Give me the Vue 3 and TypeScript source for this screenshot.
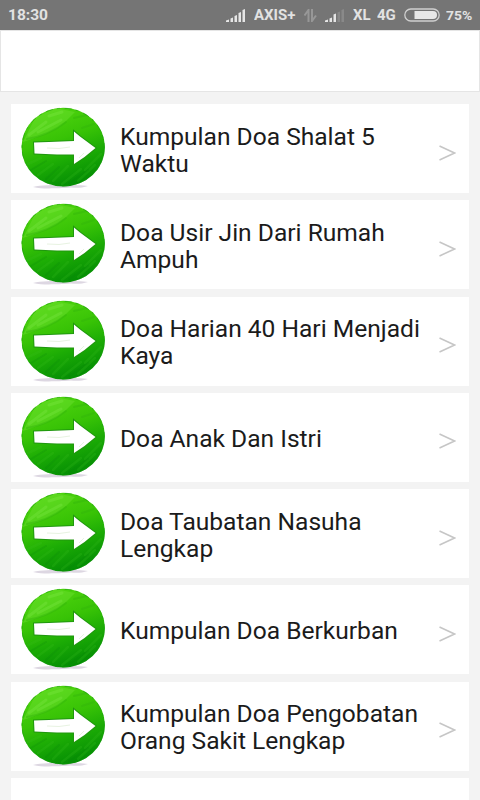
<script setup lang="ts">
interface Entry {
  id: number
  lines: string[]
}

const entries: Entry[] = [
  { id: 1, lines: ['Kumpulan Doa Shalat 5', 'Waktu'] },
  { id: 2, lines: ['Doa Usir Jin Dari Rumah', 'Ampuh'] },
  { id: 3, lines: ['Doa Harian 40 Hari Menjadi', 'Kaya'] },
  { id: 4, lines: ['Doa Anak Dan Istri'] },
  { id: 5, lines: ['Doa Taubatan Nasuha', 'Lengkap'] },
  { id: 6, lines: ['Kumpulan Doa Berkurban'] },
  { id: 7, lines: ['Kumpulan Doa Pengobatan', 'Orang Sakit Lengkap'] },
]
</script>

<template>
  <div class="screen">
    <header class="status">
      <span class="clock">18:30</span>
      <svg class="signal" width="20" height="13" viewBox="0 0 20 13">
        <path d="M0 13v-1.500l3-1V13zM4.500 13V9.500l2.500-1V13zM8.500 13V7L11 6v7zM12.500 13V4L15 3v10zM16.500 13V1L19 0v13z" fill="#e6e6e6" />
      </svg>
      <span class="carrier">AXIS+</span>
      <svg class="transfer" width="13" height="13" viewBox="0 0 13 13">
        <path d="M4.500 13V1L0.500 6.500M8 0v12l4-5.500" fill="none" stroke="#979797" stroke-width="2" />
      </svg>
      <svg class="signal second" width="20" height="13" viewBox="0 0 20 13">
        <path d="M0 13v-1.500l3-1V13zM4.500 13V9.500l2.500-1V13zM8.500 13V5.500L11 4.500V13z" fill="#e6e6e6" />
        <path d="M12.500 13V3.500L15 2.500V13zM16.500 13V1L19 0v13z" fill="#898989" />
      </svg>
      <span class="xl">XL</span>
      <span class="net">4G</span>
      <svg class="battery" width="36" height="14" viewBox="0 0 36 14">
        <rect x="0.800" y="1" width="34.400" height="12" rx="6" fill="none" stroke="#d0d0d0" stroke-width="1.300" />
        <path d="M10.500 3H29a4 4 0 0 1 0 8H10.500z" fill="#e8e8e8" />
      </svg>
      <span class="percent">75%</span>
    </header>
    <div class="toolbar"></div>
    <main class="list">
      <article v-for="entry in entries" :key="entry.id" class="row">
        <svg class="badge" width="88" height="89" viewBox="0 0 88 89">
          <defs>
            <linearGradient :id="`ball-${entry.id}`" x1="0.300" y1="0" x2="0.650" y2="1">
              <stop offset="0" stop-color="#50d50f" />
              <stop offset="0.400" stop-color="#38c306" />
              <stop offset="0.650" stop-color="#1cac05" />
              <stop offset="1" stop-color="#028a04" />
            </linearGradient>
            <clipPath :id="`edge-${entry.id}`">
              <ellipse cx="44.200" cy="43.300" rx="41.500" ry="39.300" />
            </clipPath>
          </defs>
          <path d="M14 83c8-2 20-2 30-2s20 0 25 1c-6 2-12 2-17 1.500-9 1-15 .5-22 1-6 0-11-.5-16-1.500z" fill="#ddd7e2" />
          <ellipse cx="44.200" cy="43.100" rx="41.700" ry="39.400" :fill="`url(#ball-${entry.id})`" />
          <g :clip-path="`url(#edge-${entry.id})`" fill="none" stroke-linecap="round">
            <path d="M4 38C18 33 34 29 47 17L56 8 36 4 16 14z" fill="#79e63b" opacity="0.350" />
            <path d="M10 31L27 18M19 28L42 16M30 12L43 8" stroke="#8df052" stroke-width="3" opacity="0.250" />
            <path d="M8 35C20 33 33 29 47 18M55 14L68 11M63 24L75 20" stroke="#32b60c" stroke-width="2" opacity="0.450" />
            <path d="M7 61L22 54M19 71L34 60M34 77L49 62M43 80L62 65M59 77L76 61M66 66L82 50" stroke="#3dbe20" stroke-width="2.500" opacity="0.220" />
            <path d="M12 66L27 57M27 75L40 63M50 79L69 66" stroke="#087e0b" stroke-width="2" opacity="0.180" />
          </g>
          <ellipse cx="44.200" cy="43.100" rx="41.200" ry="38.900" fill="none" stroke="#159b0b" stroke-width="1" stroke-dasharray="7 4 3 5" opacity="0.550" />
          <path d="M15 38.500l15-.5 25-1V27.500l6 5 15.500 11.500-11 9L55 60V50.500l-17 0-22.500-1z" fill="#fff" stroke="#20970f" stroke-width="2" paint-order="stroke" />
          <path d="M28 44l12 .5 11-1.500M60 54l5-5" fill="none" stroke="#e8f3e2" stroke-width="1" />
        </svg>
        <h2 class="title">
          <span v-for="line in entry.lines" :key="line" class="line">{{ line }}</span>
        </h2>
        <svg class="chevron" width="17" height="16" viewBox="0 0 17 16">
          <path d="M0.500 1L15.500 8L0.500 15" fill="none" stroke="#c6c6c6" stroke-width="1.500" />
        </svg>
      </article>
      <article class="row"></article>
    </main>
  </div>
</template>

<style>
body {
  overflow: hidden;
  background: #f3f3f3;
}
</style>

<style scoped>
.screen {
  width: 480px;
  height: 800px;
  overflow: hidden;
  background: #f3f3f3;
  font-family: Roboto, sans-serif;
}
.status {
  display: flex;
  align-items: center;
  box-sizing: border-box;
  height: 30px;
  padding: 0 8px;
  background: #757575;
  color: #e2e2e2;
  font-size: 14px;
  font-weight: 700;
  white-space: nowrap;
}
.status svg { flex: none; }
.status span {
  transform: scaleX(1.07);
  transform-origin: left center;
}
.status .clock { width: 218px; font-size: 14.500px; }
.carrier { width: 43px; margin-left: 8px; }
.transfer { margin-left: 7px; }
.second { margin-left: 8px; }
.xl { width: 18px; margin-left: 8px; }
.net { width: 19px; margin-left: 6px; }
.battery { margin-left: 8px; }
.percent { margin-left: 6px; font-size: 13px; }
.toolbar {
  box-sizing: border-box;
  height: 62px;
  border: 1px solid #e5e5e5;
  background: #fff;
}
.list {
  display: flex;
  flex-direction: column;
  gap: 7.3px;
  padding: 12px 11px 0;
}
.row {
  display: flex;
  align-items: center;
  flex: none;
  height: 89px;
  background: #fff;
}
.badge { flex: none; margin-left: 8px; }
.title {
  flex: 1;
  margin: 4px 0 0 13px;
  color: #1b1b1b;
  font-size: 23px;
  font-weight: 400;
  line-height: 27px;
  white-space: nowrap;
  transform: scaleX(1.068);
  transform-origin: left center;
}
.line { display: block; }
.chevron { flex: none; margin: 8px 13px 0 0; }
</style>
